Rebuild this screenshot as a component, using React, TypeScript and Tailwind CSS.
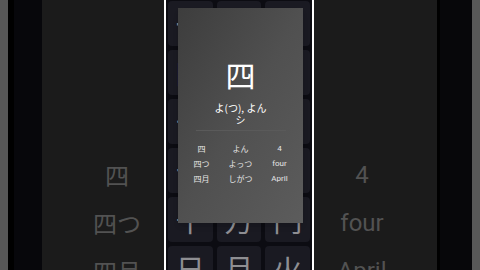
const jp = { fontFamily: '"Noto Sans CJK JP", "Noto Sans", sans-serif' };
const latin = { fontFamily: 'Roboto, "Noto Sans CJK JP", sans-serif' };

const keys = [
  "一", "二", "三",
  "四", "五", "六",
  "七", "八", "九",
  "十", "百", "人",
  "千", "万", "円",
  "日", "月", "火",
];

const rows: [string, string, string][] = [
  ["四", "よん", "4"],
  ["四つ", "よっつ", "four"],
  ["四月", "しがつ", "April"],
];

function SidePanel({ items, left, font }: { items: string[]; left: string; font: React.CSSProperties }) {
  return (
    <div className={`flex flex-col pt-[151px] text-[24px] leading-[48px] text-[#525252] ${left}`} style={font}>
      {items.map((t) => (
        <div key={t} className="text-center">
          {t}
        </div>
      ))}
    </div>
  );
}

export default function App() {
  return (
    <div className="flex h-[270px] w-[480px] overflow-hidden bg-black">
      <div className="w-[8px] shrink-0 bg-[#575757]" />
      <div className="w-[6px] shrink-0 bg-black" />
      <div className="w-[28px] shrink-0 bg-[#07070b]" />
      <div className="w-[122px] shrink-0 overflow-hidden bg-[#1b1b1b]">
        <SidePanel items={["四", "四つ", "四月"]} left="ml-[25px] w-[100px]" font={jp} />
      </div>
      <div className="w-[2px] shrink-0 bg-white" />

      <div className="relative w-[146px] shrink-0 overflow-hidden bg-[#0c0c12]">
        <div className="grid grid-cols-3 gap-[4px] px-[2px] pt-[1px]">
          {keys.map((k, i) => (
            <div
              key={i}
              className="flex h-[45px] items-center justify-center rounded-[4px] bg-[#1a1a22] text-[29px] text-[#8e8e92]"
              style={jp}
            >
              {k}
            </div>
          ))}
        </div>

        <div className="absolute left-[12px] top-[8px] flex h-[215px] w-[125px] flex-col items-center bg-gradient-to-br from-[#3d3d3d] via-[#505050] to-[#5c5c5c] pt-[50px] text-white shadow-md">
          <div className="text-[30px] leading-[32px]" style={jp}>
            四
          </div>
          <div className="mt-[12px] text-[10px] leading-[12px]" style={jp}>
            よ(つ), よん
          </div>
          <div className="text-[10px] leading-[12px]" style={jp}>
            シ
          </div>
          <div className="mt-[4px] h-px w-[90px] bg-[#5a5a5a]" />
          <div className="mt-[10px] grid w-[117px] grid-cols-3 text-[8px] leading-[15px] text-[#e6e6e6]">
            {rows.map(([a, b, c]) => (
              <div key={a} className="contents">
                <div className="text-center" style={jp}>{a}</div>
                <div className="text-center" style={jp}>{b}</div>
                <div className="text-center" style={latin}>{c}</div>
              </div>
            ))}
          </div>
        </div>
      </div>

      <div className="w-[2px] shrink-0 bg-white" />
      <div className="w-[123px] shrink-0 overflow-hidden bg-[#1b1b1b]">
        <SidePanel items={["4", "four", "April"]} left="ml-[8px] w-[80px]" font={latin} />
      </div>
      <div className="w-[3px] shrink-0 bg-black" />
      <div className="w-[32px] shrink-0 bg-[#07070a]" />
      <div className="w-[8px] shrink-0 bg-[#585858]" />
    </div>
  );
}
